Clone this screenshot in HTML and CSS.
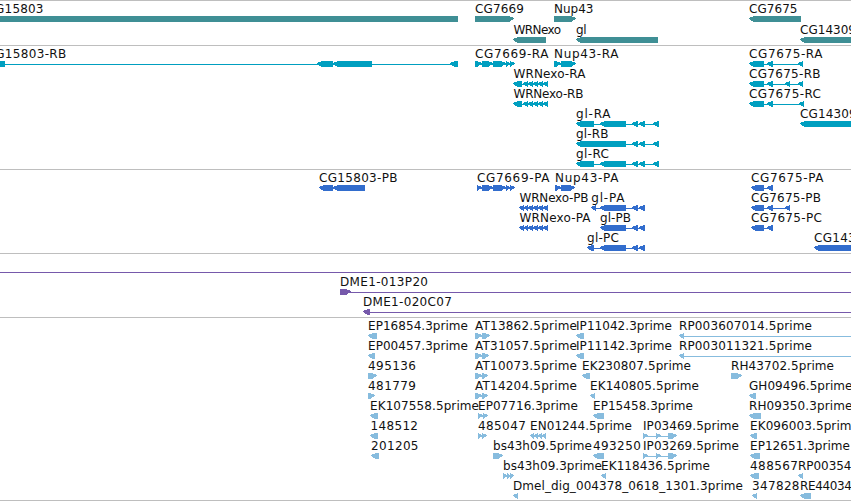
FILE: index.html
```html
<!DOCTYPE html>
<html lang="en">
<head>
    <meta charset="UTF-8">
    <meta name="viewport" content="width=device-width, initial-scale=1.0">
    <title>Genome Browser</title>
    <link rel="stylesheet" href="styles.css">
</head>
<body>
    <div class="browser">
        <svg class="track genes" id="genes"></svg>
        <svg class="track transcripts" id="transcripts"></svg>
        <svg class="track proteins" id="proteins"></svg>
        <svg class="track clones" id="clones"></svg>
        <svg class="track ests" id="ests"></svg>
    </div>
    <script src="tracks.js"></script>
</body>
</html>
```
FILE: styles.css
```css
body {
    margin: 0;
    background: #fff;
    overflow: hidden;
}
.browser {
    display: flex;
    flex-direction: column;
    border-bottom: 1px solid #bebebe;
}
.track {
    display: block;
    box-sizing: border-box;
    width: 100%;
    border-top: 1px solid #bebebe;
    overflow: hidden;
}
.label {
    font-family: "DejaVu Sans", sans-serif;
    font-size: 12px;
    fill: #111;
}
.shape {
    fill: currentColor;
    shape-rendering: crispEdges;
}
.genes {
    height: 45px;
    color: #3f8f95;
}
.transcripts {
    height: 124px;
    color: #009fc0;
}
.proteins {
    height: 84px;
    color: #326dcd;
}
.clones {
    height: 64px;
    color: #7659ab;
}
.ests {
    height: 183px;
    color: #87bcde;
}
```
FILE: tracks.js
```js
const NS = 'http://www.w3.org/2000/svg';

// feature: [row, name, label start, label end, strand, blocks, line end]
const glTail = [[632, 638], [639, 645]];
const tracks = {
    genes: [
        [0, 'CG15803', -13, 43, '-', [[-20, 458]]],
        [0, 'CG7669', 475.5, 523.5, '+', [[475, 514]]],
        [0, 'Nup43', 554.5, 593, '+', [[554, 576]]],
        [0, 'CG7675', 749.5, 797, '-', [[749, 801]]],
        [1, 'WRNexo', 514, 560.5, '-', [[513, 546]]],
        [1, 'gl', 576.5, 586, '-', [[576, 658]]],
        [1, 'CG14309', 800.5, 855.5, '-', [[800, 870]]]
    ],
    transcripts: [
        [0, 'CG15803-RB', -13, 65.7, '-', [[-10, 5], [317, 333], [333, 372], [450, 458]]],
        [0, 'CG7669-RA', 475.5, 548, '+', [[475, 482], [482, 493], [493, 506], [506, 510], [510, 515]]],
        [0, 'Nup43-RA', 554.5, 618, '+', [[554, 561], [561, 576]]],
        [0, 'CG7675-RA', 749.5, 822, '-', [[749, 764], [767, 773], [798, 803]]],
        [1, 'WRNexo-RA', 514, 585, '-', [[513, 522], [523, 528], [528, 533], [533, 538], [538, 543], [543, 548]]],
        [1, 'CG7675-RB', 749.5, 820, '-', [[749, 764], [767, 773], [785, 790], [798, 803]]],
        [2, 'WRNexo-RB', 514, 583, '-', [[513, 522], [523, 528], [528, 533], [533, 538], [538, 543], [543, 548]]],
        [2, 'CG7675-RC', 749.5, 820.5, '-', [[749, 764], [767, 773], [799, 804]]],
        [3, 'gl-RA', 576.5, 610, '-', [[576, 594], [600, 626], ...glTail, [653, 659]]],
        [3, 'CG14309-RA', 800.5, 877, '-', [[800, 890]]],
        [4, 'gl-RB', 576.5, 608, '-', [[576, 626], ...glTail, [653, 659]]],
        [5, 'gl-RC', 576.5, 608.5, '-', [[576, 594], [600, 626], ...glTail, [653, 659]]]
    ],
    proteins: [
        [0, 'CG15803-PB', 319.5, 397, '-', [[319, 333], [333, 365]]],
        [0, 'CG7669-PA', 477.5, 549, '+', [[477, 482], [482, 493], [493, 506], [506, 510], [510, 515]]],
        [0, 'Nup43-PA', 555.5, 618, '+', [[555, 561], [561, 575]]],
        [0, 'CG7675-PA', 751.5, 823, '-', [[751, 764], [767, 773]]],
        [1, 'WRNexo-PB', 520, 588, '-', [[519, 524], [524, 528], [528, 533], [533, 538], [538, 543], [543, 548]]],
        [1, 'gl-PA', 591.7, 624, '-', [[591, 596], [600, 626], ...glTail]],
        [1, 'CG7675-PB', 751.5, 820.5, '-', [[751, 764], [767, 773], [785, 790]]],
        [2, 'WRNexo-PA', 520, 590, '-', [[519, 524], [524, 528], [528, 533], [533, 538], [538, 543], [543, 548]]],
        [2, 'gl-PB', 600.5, 630.5, '-', [[600, 626], ...glTail]],
        [2, 'CG7675-PC', 751.5, 821.5, '-', [[751, 764], [767, 773]]],
        [3, 'gl-PC', 587.5, 618.5, '-', [[587, 594], [600, 626], ...glTail]],
        [3, 'CG14309-PA', 814.5, 891, '-', [[814, 890]]]
    ],
    clones: [
        [0, '', 0, 0, '+', [[-20, -10]], 870],
        [1, 'DME1-013P20', 340.5, 427.5, '+', [[340, 351]], 870],
        [2, 'DME1-020C07', 363.5, 451.3, '-', [[363, 370]], 870]
    ],
    ests: [
        [0, 'EP16854.3prime', 368.5, 467.5, '-', [[368, 377]]],
        [0, 'AT13862.5prime', 475.5, 576.5, '+', [[475, 482], [482, 490]]],
        [0, 'IP11042.3prime', 576.5, 671.5, '-', [[576, 584]]],
        [0, 'RP003607014.5prime', 679.5, 811.5, '-', [[679, 684]], 870],
        [1, 'EP00457.3prime', 368.5, 467.5, '-', [[368, 375]]],
        [1, 'AT31057.5prime', 475.5, 576.5, '+', [[475, 482], [482, 489]]],
        [1, 'IP11142.3prime', 576.5, 671.5, '-', [[576, 584]]],
        [1, 'RP003011321.5prime', 679.5, 811.5, '-', [[679, 684]], 870],
        [2, '495136', 368.5, 415.5, '+', [[368, 377]]],
        [2, 'AT10073.5prime', 475.5, 576.5, '+', [[475, 482], [482, 488]]],
        [2, 'EK230807.5prime', 582.5, 690.5, '-', [[582, 590]]],
        [2, 'RH43702.5prime', 731.5, 833.5, '+', [[731, 742]]],
        [3, '481779', 368.5, 415.5, '+', [[368, 375]]],
        [3, 'AT14204.5prime', 475.5, 576.5, '+', [[475, 482], [482, 488]]],
        [3, 'EK140805.5prime', 590.5, 698.5, '-', [[590, 595]]],
        [3, 'GH09496.5prime', 749.5, 852, '-', [[749, 756]]],
        [4, 'EK107558.5prime', 370.5, 478.5, '-', [[370, 378]]],
        [4, 'EP07716.3prime', 478.5, 577.5, '+', [[478, 483], [483, 488]]],
        [4, 'EP15458.3prime', 593.5, 692.5, '-', [[593, 604]]],
        [4, 'RH09350.3prime', 749.5, 852, '-', [[749, 761]]],
        [5, '148512', 371, 417.5, '-', [[370, 378]]],
        [5, '485047', 478.5, 525.3, '+', [[478, 482], [482, 487]]],
        [5, 'EN01244.5prime', 530.5, 631.5, '-', [[530, 534], [534, 538], [538, 542], [542, 546]]],
        [5, 'IP03469.5prime', 643.5, 738.5, '+', [[643, 648], [656, 661], [668, 677]]],
        [5, 'EK096003.5prime', 750.5, 858.5, '-', [[750, 757]]],
        [6, '201205', 371.5, 418, '-', [[371, 379]]],
        [6, 'bs43h09.5prime', 493.5, 591.5, '+', [[493, 503]]],
        [6, '493250', 593.5, 640.3, '-', [[593, 604]]],
        [6, 'IP03269.5prime', 643.5, 738.5, '+', [[643, 648], [656, 661], [668, 677]]],
        [6, 'EP12651.3prime', 750.5, 849.5, '-', [[750, 760]]],
        [7, 'bs43h09.3prime', 503.5, 601.5, '+', [[503, 507], [507, 510], [510, 514]]],
        [7, 'EK118436.5prime', 601.5, 709.5, '-', [[601, 606]]],
        [7, '488567', 750.5, 797.5, '-', [[750, 759]]],
        [7, 'RP00354', 798.5, 851, '-', [[798, 803]]],
        [8, 'Dmel_dig_004378_0618_1301.3prime', 513.5, 742.5, '-', [[513, 518]]],
        [8, '347828', 752.5, 799, '-', [[752, 757]]],
        [8, 'RE44034', 800.5, 851.5, '-', [[800, 811]]]
    ]
};

function add(svg, tag, attrs) {
    const el = document.createElementNS(NS, tag);
    for (const key in attrs) {
        el.setAttribute(key, attrs[key]);
    }
    svg.appendChild(el);
    return el;
}

// block with a blunt point on the strand side
function arrow(x1, x2, y, strand) {
    const head = Math.min(5, x2 - x1);
    const tip = strand === '-' ? x1 : x2;
    const tail = strand === '-' ? x2 : x1;
    const dir = strand === '-' ? 1 : -1;
    return [
        [tail, y], [tip + dir * head, y], [tip, y + 2],
        [tip, y + 3], [tip + dir * head, y + 6], [tail, y + 6]
    ];
}

for (const id in tracks) {
    const svg = document.getElementById(id);
    const rowHeight = id === 'genes' ? 21 : 20;
    tracks[id].forEach(([row, name, start, end, strand, blocks, lineEnd]) => {
        const top = row * rowHeight;
        const from = blocks[0][0];
        const to = lineEnd || blocks[blocks.length - 1][1];
        if (blocks.length > 1 || lineEnd) {
            // start inside the first block so that its tip stays pointed
            add(svg, 'rect', { class: 'shape', x: from + 2, y: top + 18, width: to - from - 4, height: 1 });
        }
        blocks.forEach(([x1, x2]) => {
            const points = arrow(x1, x2, top + 15, strand).map(p => p.join(',')).join(' ');
            add(svg, 'polygon', { class: 'shape', points: points });
        });
        if (name) {
            const text = add(svg, 'text', { class: 'label', x: start - 0.5, y: top + 12, textLength: end - start + 1 });
            text.textContent = name;
        }
    });
}
```
